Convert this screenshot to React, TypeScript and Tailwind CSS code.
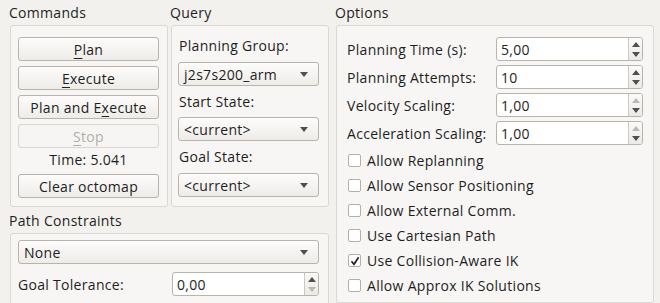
import React from "react";

const btn =
  "h-[24px] rounded-[3px] border border-[#b9b3ab] bg-linear-to-b from-[#fdfcfb] to-[#eeece9] flex items-center";

function Mn({ children }: { children: React.ReactNode }) {
  return <span className="underline underline-offset-[3px] decoration-1">{children}</span>;
}

function Button({ children, disabled }: { children: React.ReactNode; disabled?: boolean }) {
  return (
    <div
      className={
        disabled
          ? "h-[24px] rounded-[3px] border border-[#d9d5d0] bg-[#f6f5f3] flex items-center justify-center text-[#b3aea8]"
          : btn + " justify-center"
      }
    >
      {children}
    </div>
  );
}

function Down({ color = "#4f4f4f" }: { color?: string }) {
  return (
    <svg width="8" height="5" viewBox="0 0 8 5">
      <path d="M0 0H8L4 5Z" fill={color} />
    </svg>
  );
}

function Up({ color = "#4f4f4f" }: { color?: string }) {
  return (
    <svg width="8" height="5" viewBox="0 0 8 5">
      <path d="M0 5H8L4 0Z" fill={color} />
    </svg>
  );
}

function Combo({ value }: { value: string }) {
  return (
    <div className={btn + " justify-between pl-[5px] pr-[10px]"}>
      <span>{value}</span>
      <Down />
    </div>
  );
}

function Spin({ value, upOff, downOff }: { value: string; upOff?: boolean; downOff?: boolean }) {
  return (
    <div className="flex h-[24px] w-[147px] rounded-[3px] border border-[#b9b3ab] bg-white overflow-hidden">
      <div className="flex-1 pl-[4px] flex items-center">{value}</div>
      <div className="w-[14px] border-l border-[#cdc8c1] bg-linear-to-b from-[#fbfaf9] to-[#eceae7] flex flex-col items-center justify-center gap-[5px]">
        <Up color={upOff ? "#bdb8b2" : "#4f4f4f"} />
        <Down color={downOff ? "#bdb8b2" : "#4f4f4f"} />
      </div>
    </div>
  );
}

function Check({ label, checked }: { label: string; checked?: boolean }) {
  return (
    <div className="h-[25px] flex items-center gap-[6px] pl-[1px]">
      <div className="w-[13px] h-[13px] rounded-[2px] border border-[#b5afa8] bg-white flex items-center justify-center">
        {checked && (
          <svg width="10" height="10" viewBox="0 0 10 10">
            <path d="M1.5 5.2L4 8.3L8.6 1.2" stroke="#1e1e1e" strokeWidth="1.6" fill="none" />
          </svg>
        )}
      </div>
      <span>{label}</span>
    </div>
  );
}

function Group({
  title,
  className,
  boxClass,
  children,
}: {
  title: string;
  className?: string;
  boxClass?: string;
  children: React.ReactNode;
}) {
  return (
    <div className={className}>
      <div className="h-[25px] pt-[3px] -ml-[1px]">{title}</div>
      <div className={"rounded-[3px] border border-[#dcd8d3] bg-[#f7f6f4] " + (boxClass ?? "")}>{children}</div>
    </div>
  );
}

export default function App() {
  return (
    <div className="w-[660px] h-[303px] overflow-hidden bg-[#f3f1ee] flex font-['Open_Sans',sans-serif] text-[14px] leading-[19px] tracking-[0.3px] text-[#1e1e1e]">
      <div className="w-[330px] flex flex-col pl-[10px]">
        <div className="flex gap-[3px]">
          <Group title="Commands" className="w-[158px]" boxClass="h-[182px] pt-[11px] pl-[7px] pr-[8px] flex flex-col gap-[5px]">
            <Button>
              <Mn>P</Mn>lan
            </Button>
            <Button>
              <Mn>E</Mn>xecute
            </Button>
            <Button>
              Plan and E<Mn>x</Mn>ecute
            </Button>
            <Button disabled>
              <Mn>S</Mn>top
            </Button>
            <div className="h-[19px] -mt-[3px] text-center">Time: 5.041</div>
            <Button>Clear octomap</Button>
          </Group>
          <Group title="Query" className="w-[158px]" boxClass="h-[182px] pt-[10px] pl-[6px] pr-[9px] flex flex-col">
            <div className="h-[26px] pl-[1px]">Planning Group:</div>
            <Combo value="j2s7s200_arm" />
            <div className="h-[25px] mt-[6px] pl-[1px]">Start State:</div>
            <Combo value="<current>" />
            <div className="h-[26px] mt-[6px] pl-[1px]">Goal State:</div>
            <Combo value="<current>" />
          </Group>
        </div>
        <Group title="Path Constraints" className="w-[319px] mt-[1px]" boxClass="h-[90px] pt-[6px] pl-[7px] pr-[9px]">
          <Combo value="None" />
          <div className="mt-[8px] flex items-center justify-between">
            <span>Goal Tolerance:</span>
            <Spin value="0,00" downOff />
          </div>
        </Group>
      </div>
      <Group title="Options" className="ml-[6px] w-[318px]" boxClass="h-[278px] pt-[11px] pl-[10px] pr-[10px]">
        <div className="flex flex-col gap-[4px]">
          <div className="flex items-center justify-between h-[24px]">
            <span>Planning Time (s):</span>
            <Spin value="5,00" />
          </div>
          <div className="flex items-center justify-between h-[24px]">
            <span>Planning Attempts:</span>
            <Spin value="10" />
          </div>
          <div className="flex items-center justify-between h-[24px]">
            <span>Velocity Scaling:</span>
            <Spin value="1,00" upOff />
          </div>
          <div className="flex items-center justify-between h-[24px]">
            <span>Acceleration Scaling:</span>
            <Spin value="1,00" upOff />
          </div>
        </div>
        <div className="mt-[3px] flex flex-col">
          <Check label="Allow Replanning" />
          <Check label="Allow Sensor Positioning" />
          <Check label="Allow External Comm." />
          <Check label="Use Cartesian Path" />
          <Check label="Use Collision-Aware IK" checked />
          <Check label="Allow Approx IK Solutions" />
        </div>
      </Group>
    </div>
  );
}
